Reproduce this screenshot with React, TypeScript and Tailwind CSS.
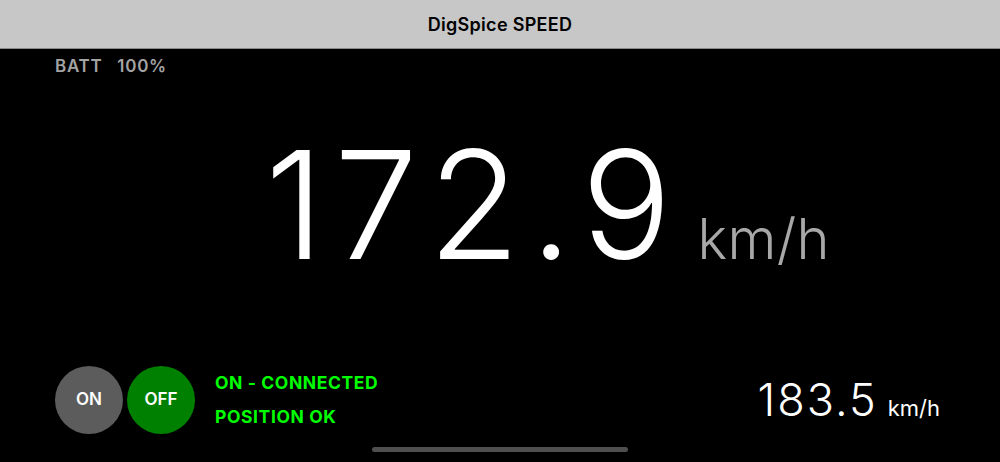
const FONT = "font-['Inter','Liberation_Sans',sans-serif]";

function ToggleButton({ label, active }: { label: string; active: boolean }) {
  return (
    <div
      className={`flex h-[68px] w-[68px] items-center justify-center rounded-full text-[17px] font-semibold text-white ${
        active ? 'bg-[#008000]' : 'bg-[#5c5c5c]'
      }`}
    >
      {label}
    </div>
  );
}

export default function App() {
  return (
    <div className={`flex h-[462px] w-[1000px] flex-col bg-black ${FONT}`}>
      <header className="flex h-[49px] shrink-0 items-center justify-center border-b border-[#8a8a8a] bg-[#c7c7c7]">
        <h1 className="text-[18px] font-semibold tracking-[0.3px] text-black">DigSpice SPEED</h1>
      </header>

      <div className="flex gap-[15px] pl-[55px] pt-[6px] text-[17px] font-semibold leading-[22px] tracking-[0.7px] text-[#a3a3a3]">
        <span>BATT</span>
        <span>100%</span>
      </div>

      <div className="mt-[53px] flex items-baseline pl-[265px]">
        <span className="text-[150px] font-light leading-[150px] tracking-[10px] text-white">172.9</span>
        <span className="ml-[16px] text-[56px] font-light tracking-[0.3px] text-[#a8a8a8]">km/h</span>
      </div>

      <div className="mt-auto flex items-center px-[55px] pb-[13px]">
        <div className="flex gap-[4px]">
          <ToggleButton label="ON" active={false} />
          <ToggleButton label="OFF" active={true} />
        </div>
        <div className="ml-[20px] flex flex-col gap-[12px] text-[17.5px] font-bold leading-[22px] tracking-[0.6px] text-[#00ff00]">
          <span>ON - CONNECTED</span>
          <span>POSITION OK</span>
        </div>
        <div className="ml-auto flex items-baseline pr-[5px] text-white">
          <span className="text-[45px] font-light tracking-[2px]">183.5</span>
          <span className="ml-[10px] text-[22px]">km/h</span>
        </div>
      </div>

      <div className="flex justify-center pb-[10px]">
        <div className="h-[5px] w-[256px] rounded-full bg-[#4f4f4f]" />
      </div>
    </div>
  );
}
